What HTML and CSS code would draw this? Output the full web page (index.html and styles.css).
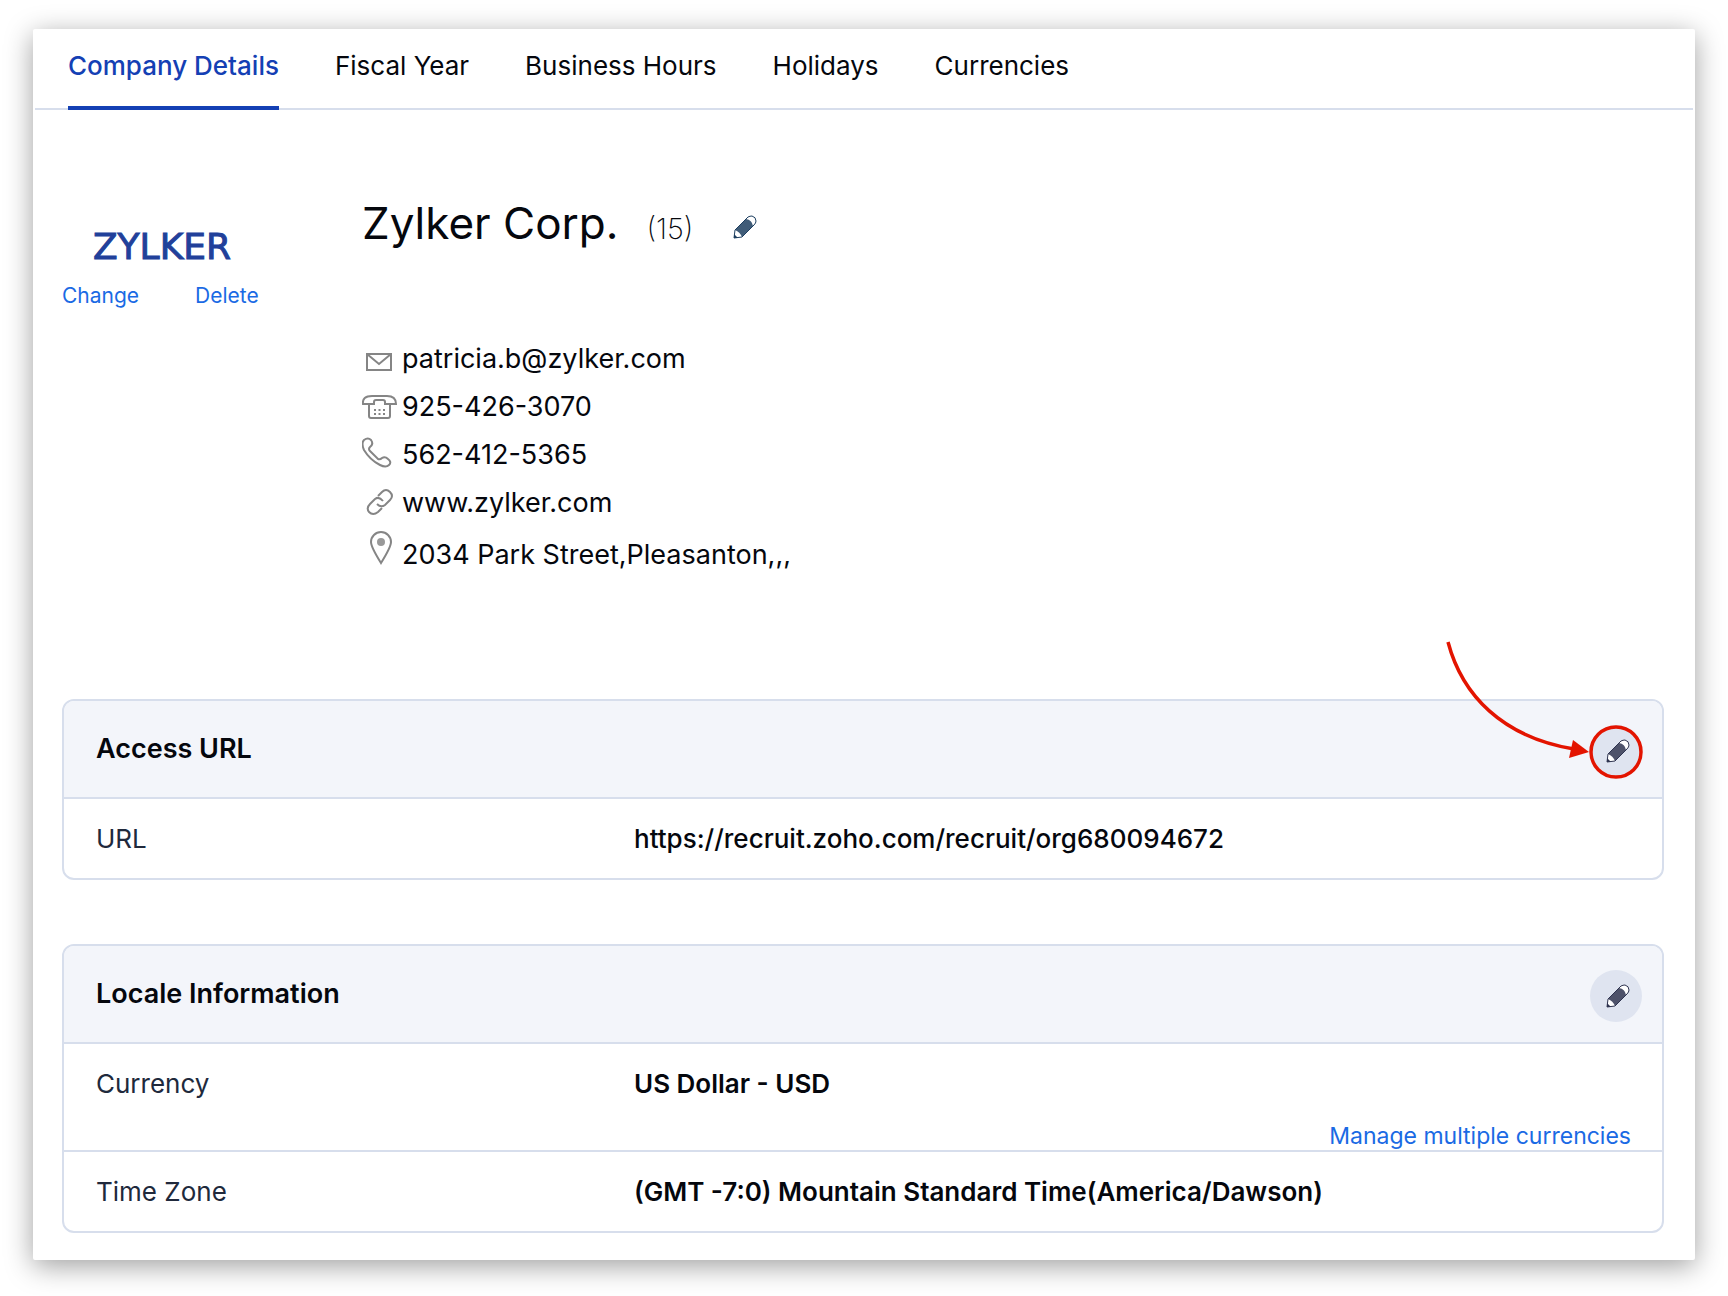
FILE: index.html
```html
<!DOCTYPE html>
<html lang="en">
<head>
    <meta charset="UTF-8">
    <meta name="viewport" content="width=device-width, initial-scale=1.0">
    <title>Company Details</title>
    <link rel="stylesheet" href="styles.css">
</head>
<body>
    <svg class="sprite" aria-hidden="true">
        <symbol id="pencil" viewBox="0 0 24 24">
            <path d="M1 23L2 15L15 2Q17 1 19 1Q23 2 23 6Q23 8 21 10L9 22Z" fill="#fff" stroke="currentColor" stroke-width="1"/>
            <path d="M2 15L13 4Q19 5 20 11L9 22Q7 17 2 15Z" fill="currentColor" opacity="0.85"/>
            <path d="M1 23L1 19L5 23Z" fill="currentColor"/>
        </symbol>
    </svg>

    <main class="card">
        <nav class="tabs">
            <a href="#" class="tab active">Company Details</a>
            <a href="#" class="tab">Fiscal Year</a>
            <a href="#" class="tab">Business Hours</a>
            <a href="#" class="tab">Holidays</a>
            <a href="#" class="tab">Currencies</a>
        </nav>

        <section class="profile">
            <div class="brand">
                <div class="logo">ZYLKER</div>
                <div class="brand-links">
                    <a href="#">Change</a>
                    <a href="#">Delete</a>
                </div>
            </div>
            <div class="company">
                <div class="company-title">
                    <h1>Zylker Corp.</h1>
                    <span class="count">(15)</span>
                    <button type="button" class="edit-plain" aria-label="Edit company">
                        <svg class="pencil"><use href="#pencil"/></svg>
                    </button>
                </div>
                <ul class="contact">
                    <li>
                        <svg class="contact-icon" viewBox="0 0 40 48">
                            <path d="M5 19H29V35H5ZM5 19L17 29L29 19"/>
                        </svg>
                        <span>patricia.b@zylker.com</span>
                    </li>
                    <li>
                        <svg class="contact-icon" viewBox="0 0 40 48">
                            <path d="M1 21Q0 13 10 13H25Q34 13 34 21H23V19Q23 17 21 17H14Q12 17 12 19V21ZM7 21V33Q7 35 9 35H26Q28 35 28 33V21"/>
                            <path d="M12 27H23M12 31H23" stroke-dasharray="2 2.5"/>
                        </svg>
                        <span>925-426-3070</span>
                    </li>
                    <li>
                        <svg class="contact-icon" viewBox="0 0 40 48">
                            <path d="M2 9Q6 6 9 9Q12 13 8 16Q6 18 8 20L16 28Q18 29 20 27Q23 25 26 28Q30 31 27 34Q24 37 18 34Q8 29 2 19Q-1 12 2 9Z"/>
                        </svg>
                        <span>562-412-5365</span>
                    </li>
                    <li>
                        <svg class="contact-icon" viewBox="0 0 40 48">
                            <path d="M16 17L20 13Q24 9 28 13Q32 17 28 21L23 26Q19 29 15 25"/>
                            <path d="M21 22Q17 17 13 20L8 25Q4 29 7 33Q11 37 16 33L20 29"/>
                        </svg>
                        <span>www.zylker.com</span>
                    </li>
                    <li class="address">
                        <svg class="contact-icon" viewBox="0 0 40 48">
                            <path d="M19 36Q9 20 9 15A10 10 0 0 1 29 15Q29 20 19 36Z"/>
                            <circle cx="19" cy="15" r="4" class="dot"/>
                        </svg>
                        <span>2034 Park Street,Pleasanton,,,</span>
                    </li>
                </ul>
            </div>
        </section>

        <section class="panel">
            <header class="panel-header">
                <h2>Access URL</h2>
                <button type="button" class="edit-round" aria-label="Edit access URL">
                    <svg class="pencil"><use href="#pencil"/></svg>
                </button>
                <svg class="callout" viewBox="0 0 210 155" aria-hidden="true">
                    <path d="M8 11C22 64 62 106 134 118" fill="none" stroke="#e31400" stroke-width="3.5"/>
                    <path d="M133 109L149 121L129 127Z" fill="#e31400"/>
                    <circle cx="176" cy="121" r="25" fill="none" stroke="#e31400" stroke-width="3.5"/>
                </svg>
            </header>
            <dl class="rows">
                <div class="row">
                    <dt>URL</dt>
                    <dd class="url">https://recruit.zoho.com/recruit/org680094672</dd>
                </div>
            </dl>
        </section>

        <section class="panel">
            <header class="panel-header">
                <h2>Locale Information</h2>
                <button type="button" class="edit-round" aria-label="Edit locale information">
                    <svg class="pencil"><use href="#pencil"/></svg>
                </button>
            </header>
            <dl class="rows">
                <div class="row">
                    <dt>Currency</dt>
                    <dd>US Dollar - USD</dd>
                    <dd class="more"><a href="#">Manage multiple currencies</a></dd>
                </div>
                <div class="row">
                    <dt>Time Zone</dt>
                    <dd>(GMT -7:0) Mountain Standard Time(America/Dawson)</dd>
                </div>
            </dl>
        </section>
    </main>
</body>
</html>
```
FILE: styles.css
```css
:root {
    --blue: #1440b4;
    --link: #1a6ae4;
    --line: #d7deec;
    --header: #f3f5fa;
    --ink: #05070d;
    --label: #20293c;
}

* {
    box-sizing: border-box;
}

body {
    margin: 0;
    padding: 29px 33px 37px;
    background: #fff;
    color: var(--ink);
    font-family: Inter, sans-serif;
    font-size: 26px;
}

a {
    color: var(--link);
    text-decoration: none;
}

button {
    border: 0;
    padding: 0;
    background: none;
    cursor: pointer;
}

.sprite {
    position: absolute;
    width: 0;
    height: 0;
}

.card {
    padding-bottom: 27px;
    background: #fff;
    border-radius: 2px;
    box-shadow: 0 6px 28px rgba(0, 0, 0, 0.38);
}

.tabs {
    display: flex;
    gap: 56px;
    margin: 0 2px;
    padding: 0 33px;
    border-bottom: 2px solid var(--line);
}

.tab {
    height: 81px;
    margin-bottom: -2px;
    border-bottom: 4px solid transparent;
    color: var(--ink);
    line-height: 74px;
}

.tab.active {
    border-color: var(--blue);
    color: var(--blue);
    font-weight: 500;
}

.profile {
    display: grid;
    grid-template-columns: 300px 1fr;
    padding: 85px 29px 116px;
}

.brand {
    width: 200px;
    padding-top: 28px;
}

.logo {
    color: #21409a;
    font-family: "DejaVu Sans", sans-serif;
    font-size: 36px;
    line-height: 48px;
    text-align: center;
    -webkit-text-stroke: 1px #21409a;
}

.brand-links {
    display: flex;
    gap: 56px;
    margin-top: 9px;
    font-size: 21px;
    line-height: 32px;
}

.company-title {
    display: flex;
    align-items: baseline;
    margin-bottom: 78px;
    line-height: 56px;
}

h1 {
    margin: 0;
    font-size: 44px;
    font-weight: 400;
}

.count {
    margin-left: 28px;
    font-size: 29px;
    font-weight: 200;
}

.pencil {
    display: block;
    width: 24px;
    height: 24px;
}

.edit-plain {
    margin-left: 40px;
    color: #1e3f60;
}

.contact {
    margin: 0;
    padding: 0;
    list-style: none;
    font-size: 27px;
    line-height: 48px;
}

.contact li {
    display: flex;
}

.contact .address {
    line-height: 56px;
}

.contact-icon {
    width: 40px;
    height: 48px;
    fill: none;
    stroke: #858585;
    stroke-width: 2;
}

.contact-icon .dot {
    fill: #999;
    stroke: none;
}

.panel {
    margin: 0 31px 64px 29px;
    border: 2px solid var(--line);
    border-radius: 12px;
}

.panel:last-child {
    margin-bottom: 0;
}

.panel-header {
    position: relative;
    display: flex;
    justify-content: space-between;
    height: 98px;
    padding: 24px 20px 20px 32px;
    background: var(--header);
    border-bottom: 2px solid var(--line);
    border-radius: 10px 10px 0 0;
}

h2 {
    margin: 0;
    font-size: 27px;
    font-weight: 600;
    line-height: 48px;
}

.edit-round {
    display: grid;
    place-items: center;
    width: 52px;
    height: 52px;
    padding-left: 4px;
    border-radius: 50%;
    background: #dfe4f0;
    color: #2f3450;
}

/* arrow pointing at the edit button */
.callout {
    position: absolute;
    top: -70px;
    right: 12px;
    width: 210px;
    height: 155px;
    pointer-events: none;
}

.rows {
    margin: 0;
}

.row {
    display: grid;
    grid-template-columns: 538px 1fr;
    padding-left: 32px;
}

.row + .row {
    border-top: 2px solid var(--line);
}

dt,
dd {
    margin: 0;
    padding: 24px 0;
    line-height: 31px;
}

dt {
    color: var(--label);
}

dd {
    font-weight: 600;
}

dd.url {
    font-weight: 500;
}

dd.more {
    grid-column: 1 / -1;
    padding: 0 31px 0 0;
    font-size: 23px;
    font-weight: 400;
    line-height: 27px;
    text-align: right;
}
```
